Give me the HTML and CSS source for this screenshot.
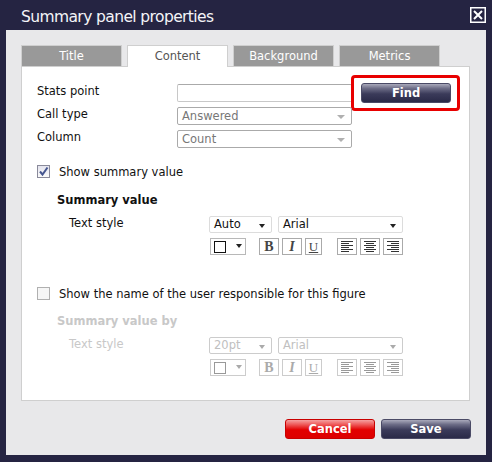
FILE: index.html
```html
<!DOCTYPE html>
<html lang="en">
<head>
    <meta charset="UTF-8">
    <title>Summary panel properties</title>
    <link rel="stylesheet" href="styles.css">
</head>
<body>
    <div class="dialog">
        <div class="titlebar">
            <h1>Summary panel properties</h1>
            <span class="close">
                <svg width="16" height="16" viewBox="0 0 16 16">
                    <rect x="0.75" y="0.75" width="14.5" height="14.5" fill="none" stroke="#fff" stroke-width="1.5"/>
                    <path d="M4 4 L12 12 M12 4 L4 12" stroke="#fff" stroke-width="2"/>
                </svg>
            </span>
        </div>
        <div class="body">
            <div class="tabs">
                <div class="tab">Title</div>
                <div class="tab active">Content</div>
                <div class="tab">Background</div>
                <div class="tab">Metrics</div>
            </div>
            <div class="panel">
                <div class="fields">
                    <span class="label">Stats point</span>
                    <div class="input"></div>
                    <span class="highlight"><span class="btn btn-navy">Find</span></span>
                    <span class="label">Call type</span>
                    <div class="select muted">Answered<i class="arrow"></i></div>
                    <span></span>
                    <span class="label">Column</span>
                    <div class="select muted">Count<i class="arrow"></i></div>
                </div>

                <div class="check">
                    <span class="box">
                        <svg width="11" height="11" viewBox="0 0 11 11">
                            <path d="M2 5.5 L4.5 8.5 L9.5 1.5" fill="none" stroke="#46568f" stroke-width="2"/>
                        </svg>
                    </span>
                    Show summary value
                </div>
                <div class="group">
                    <h3>Summary value</h3>
                    <div class="style-row">
                        <span class="label">Text style</span>
                        <div class="controls">
                            <div class="line">
                                <div class="select size">Auto<i class="arrow"></i></div>
                                <div class="select font">Arial<i class="arrow"></i></div>
                            </div>
                            <div class="line">
                                <div class="swatch"><span class="chip"></span><i class="arrow"></i></div>
                                <div class="fmt">
                                    <span class="tool bold">B</span>
                                    <span class="tool italic">I</span>
                                    <span class="tool under narrow">U</span>
                                </div>
                                <div class="fmt">
                                    <span class="tool"><svg width="12" height="11" viewBox="0 0 12 11"><path d="M0 0.5H12M0 2.5H8M0 4.5H12M0 6.5H8M0 8.5H12M0 10.5H8"/></svg></span>
                                    <span class="tool"><svg width="12" height="11" viewBox="0 0 12 11"><path d="M0 0.5H12M2 2.5H10M0 4.5H12M2 6.5H10M0 8.5H12M2 10.5H10"/></svg></span>
                                    <span class="tool"><svg width="12" height="11" viewBox="0 0 12 11"><path d="M0 0.5H12M4 2.5H12M0 4.5H12M4 6.5H12M0 8.5H12M4 10.5H12"/></svg></span>
                                </div>
                            </div>
                        </div>
                    </div>
                </div>

                <div class="check second">
                    <span class="box empty"></span>
                    Show the name of the user responsible for this figure
                </div>
                <div class="group disabled">
                    <h3>Summary value by</h3>
                    <div class="style-row">
                        <span class="label">Text style</span>
                        <div class="controls">
                            <div class="line">
                                <div class="select size">20pt<i class="arrow"></i></div>
                                <div class="select font">Arial<i class="arrow"></i></div>
                            </div>
                            <div class="line">
                                <div class="swatch"><span class="chip"></span><i class="arrow"></i></div>
                                <div class="fmt">
                                    <span class="tool bold">B</span>
                                    <span class="tool italic">I</span>
                                    <span class="tool under narrow">U</span>
                                </div>
                                <div class="fmt">
                                    <span class="tool"><svg width="12" height="11" viewBox="0 0 12 11"><path d="M0 0.5H12M0 2.5H8M0 4.5H12M0 6.5H8M0 8.5H12M0 10.5H8"/></svg></span>
                                    <span class="tool"><svg width="12" height="11" viewBox="0 0 12 11"><path d="M0 0.5H12M2 2.5H10M0 4.5H12M2 6.5H10M0 8.5H12M2 10.5H10"/></svg></span>
                                    <span class="tool"><svg width="12" height="11" viewBox="0 0 12 11"><path d="M0 0.5H12M4 2.5H12M0 4.5H12M4 6.5H12M0 8.5H12M4 10.5H12"/></svg></span>
                                </div>
                            </div>
                        </div>
                    </div>
                </div>
            </div>
            <div class="actions">
                <span class="btn btn-red">Cancel</span>
                <span class="btn btn-navy">Save</span>
            </div>
        </div>
    </div>
</body>
</html>
```

FILE: styles.css
```css
* {
    margin: 0;
    padding: 0;
    box-sizing: border-box;
}
body {
    background: #252442;
    font-family: "DejaVu Sans", Verdana, sans-serif;
    font-size: 11.5px;
    color: #111;
    width: 492px;
    height: 462px;
    overflow: hidden;
}
.titlebar {
    display: flex;
    justify-content: space-between;
    height: 30px;
    padding: 4px 6px 0 21px;
}
.titlebar h1 {
    font-size: 15.5px;
    font-weight: normal;
    letter-spacing: -0.6px;
    color: #f4f4f8;
    line-height: 26px;
}
.close {
    margin-top: 3px;
    width: 16px;
    height: 16px;
}
.close svg {
    display: block;
}
.body {
    margin: 0 6px;
    height: 425px;
    background: #e8e8ea;
    padding: 15px 16px 0 15px;
}
.tabs {
    display: flex;
    gap: 5px;
    height: 21px;
}
.tab {
    width: 101px;
    height: 21px;
    border: 1px solid #cfcfcf;
    border-bottom: none;
    background: #999;
    color: #fff;
    font-size: 11.5px;
    text-align: center;
    line-height: 20px;
}
.tab.active {
    background: #fff;
    color: #555;
    height: 22px;
    position: relative;
    z-index: 1;
}
.panel {
    height: 335px;
    background: #fff;
    border: 1px solid #cfcfcf;
    padding: 17px 15px 0 15px;
}
.fields {
    display: grid;
    grid-template-columns: 140px 175px auto;
    grid-auto-rows: 18px;
    row-gap: 5px;
}
.label {
    line-height: 15px;
}
.input {
    height: 18px;
    border: 1px solid #c8c8c8;
    border-top-color: #aaa;
    border-radius: 2px;
}
.select {
    position: relative;
    height: 18px;
    border: 1px solid #aaa;
    border-radius: 2px;
    padding-left: 4px;
    line-height: 16px;
    color: #111;
    background: #fff;
}
.select.muted {
    color: #777;
}
.arrow {
    position: absolute;
    right: 6px;
    top: 7px;
    width: 0;
    height: 0;
    border-left: 4px solid transparent;
    border-right: 4px solid transparent;
    border-top: 4px solid #222;
}
.select.muted .arrow {
    border-top-color: #b0b0b0;
}
.highlight {
    justify-self: start;
    align-self: start;
    margin: -9px 0 -9px -1px;
    border: 3px solid #e80000;
    border-radius: 4px;
    padding: 5px 6px 5px 7px;
}
.btn {
    display: block;
    width: 90px;
    height: 20px;
    border-radius: 3px;
    color: #fff;
    font-weight: bold;
    font-size: 11.5px;
    text-align: center;
    line-height: 18px;
}
.btn-navy {
    border: 1px solid #4a4a66;
    background: linear-gradient(#a9a9bb 0%, #6c6c86 25%, #3b3b5a 55%, #2a2a48 100%);
}
.btn-red {
    border: 1px solid #c80000;
    background: linear-gradient(#f5a0a0 0%, #ee5a5a 25%, #e20000 55%, #dd0000 100%);
}
.check {
    display: flex;
    align-items: center;
    gap: 9px;
    height: 13px;
    margin-top: 17px;
}
.check.second {
    margin-top: 32px;
}
.box {
    width: 13px;
    height: 13px;
    border: 1px solid #8a8a9a;
    background: linear-gradient(#e4e4ee, #fafafa);
    display: flex;
    align-items: center;
    justify-content: center;
}
.box.empty {
    border-color: #b0b0b0;
    background: #f6f6f6;
}
.group {
    padding-left: 20px;
}
.group h3 {
    margin-top: 14px;
    font-size: 11.5px;
    line-height: 16px;
}
.check.second + .group h3 {
    margin-top: 13px;
}
.style-row {
    display: flex;
    margin-top: 8px;
    padding-left: 12px;
}
.style-row .label {
    width: 140px;
}
.controls {
    display: flex;
    flex-direction: column;
    gap: 5px;
}
.line {
    display: flex;
    gap: 6px;
    height: 17px;
}
.line + .line {
    gap: 13px;
    padding-left: 1px;
}
.select.size {
    width: 63px;
    height: 17px;
    border-color: #dcdcdc;
    line-height: 15px;
}
.select.font {
    width: 125px;
    height: 17px;
    border-color: #dcdcdc;
    line-height: 15px;
}
.select.size .arrow, .select.font .arrow {
    top: 7px;
    border-width: 4px 3.5px 0 3.5px;
}
.swatch {
    position: relative;
    width: 36px;
    height: 17px;
    border: 1px solid #b8b8b8;
    padding: 2px 0 0 3px;
}
.chip {
    display: block;
    width: 12px;
    height: 12px;
    border: 1px solid #111;
    background: #fff;
}
.swatch .arrow {
    right: 3px;
    top: 5px;
    border-width: 4px 3.5px 0 3.5px;
}
.fmt {
    display: flex;
    gap: 3px;
}
.line .fmt + .fmt {
    margin-left: 2px;
}
.tool {
    width: 20px;
    height: 17px;
    border: 1px solid #aaa;
    display: flex;
    align-items: center;
    justify-content: center;
    font-family: "Liberation Serif", serif;
    font-size: 14px;
    color: #444;
}
.tool.narrow {
    width: 17px;
}
.tool.bold {
    font-weight: bold;
}
.tool.italic {
    font-style: italic;
    font-weight: bold;
}
.tool.under {
    text-decoration: underline;
    font-size: 13px;
}
.tool svg path {
    stroke: #333;
    stroke-width: 1;
}
.disabled {
    color: #c8c8c8;
}
.disabled .select {
    color: #c0c0c0;
    border-color: #ccc;
}
.disabled .arrow {
    border-top-color: #aaa;
}
.disabled .chip {
    border-color: #999;
}
.disabled .swatch, .disabled .tool {
    border-color: #ccc;
}
.disabled .tool {
    color: #aaa;
}
.disabled .tool svg path {
    stroke: #999;
}
.actions {
    display: flex;
    justify-content: flex-end;
    gap: 6px;
    margin: 18px -1px 0 0;
}
```
